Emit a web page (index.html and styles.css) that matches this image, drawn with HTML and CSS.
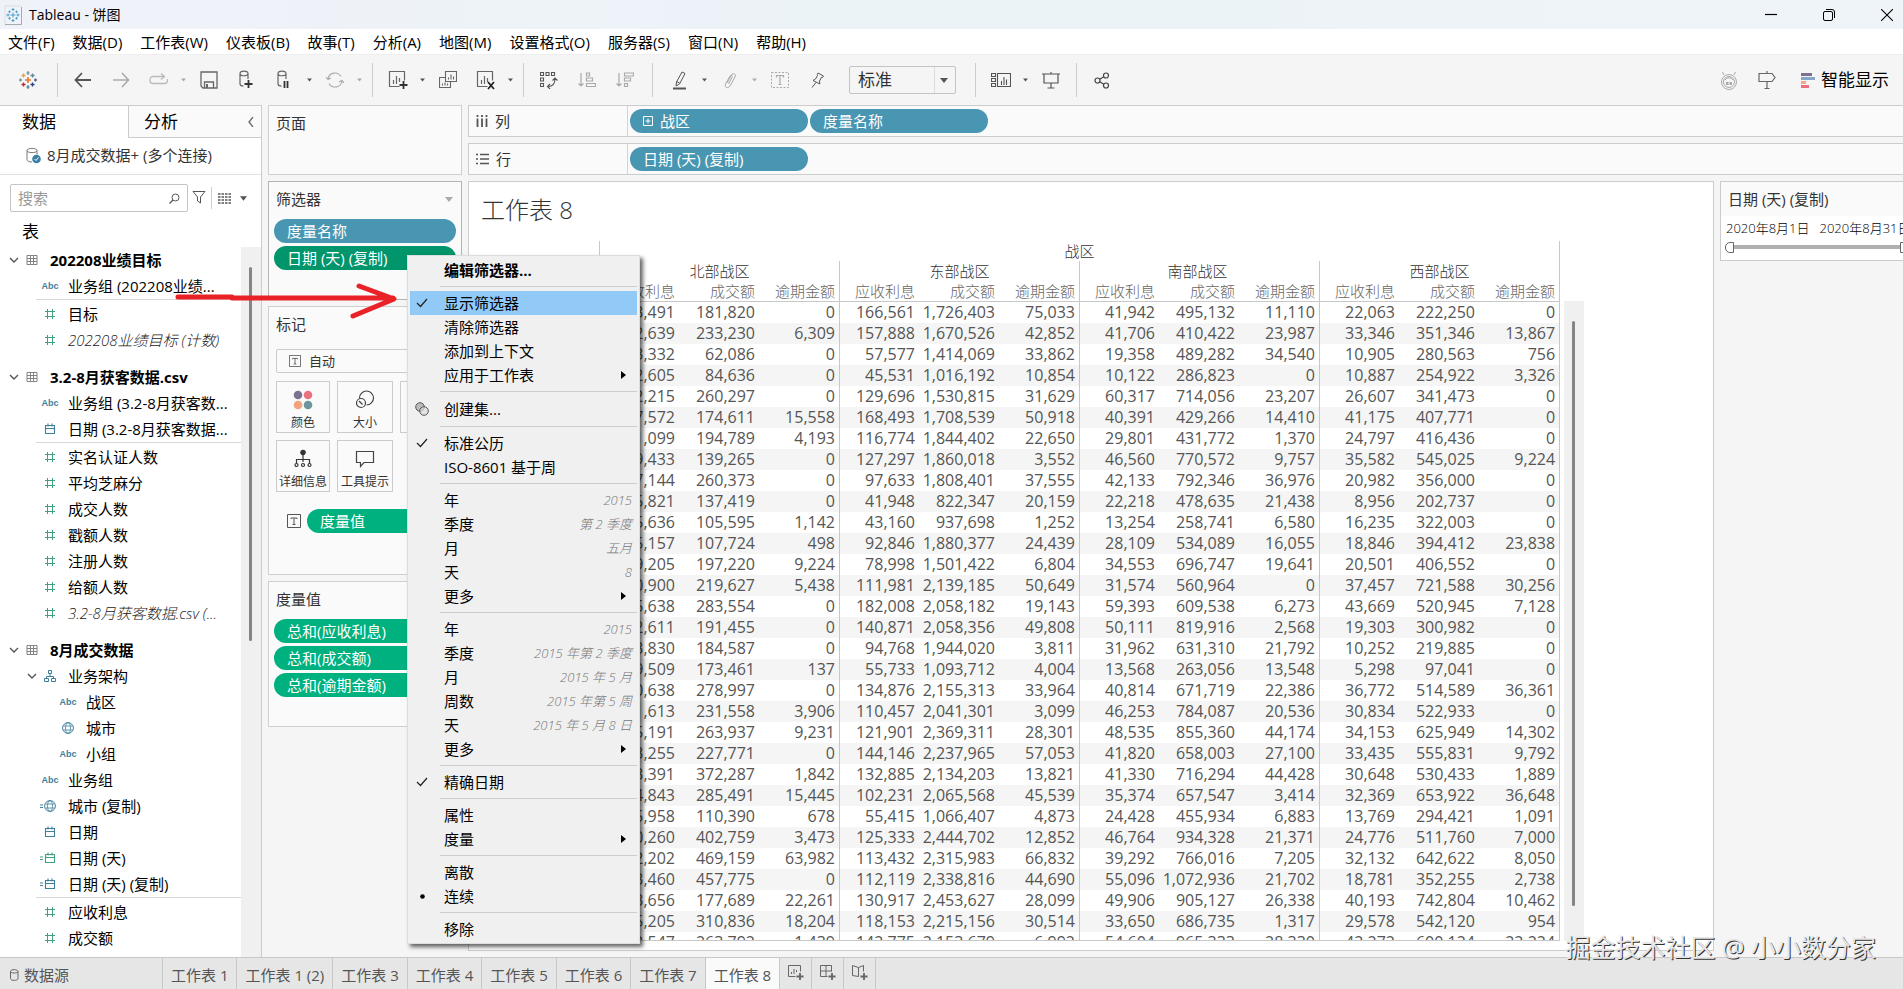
FILE: index.html
```html
<!DOCTYPE html>
<html lang="zh-CN">
<head>
	<title>Tableau - 饼图</title>
	<meta charset="UTF-8">
	<meta name="viewport" content="width=device-width, initial-scale=1.0">
	<link rel="stylesheet" href="styles.css">
</head>
<body>
	<!-- shared icons -->
	<svg class="defs" width="0" height="0">
		<symbol id="i-caret" viewBox="0 0 8 5"><path d="M0 0h8L4 5z" fill="currentColor"/></symbol>
		<symbol id="i-chev" viewBox="0 0 10 6"><path d="M1 1l4 4 4-4" fill="none" stroke="#555" stroke-width="1.4"/></symbol>
		<symbol id="i-check" viewBox="0 0 12 10"><path d="M1 5l3.500 3.500L11 1" fill="none" stroke="#222" stroke-width="1.200"/></symbol>
		<symbol id="i-table" viewBox="0 0 12 12"><path d="M1 1.500h10v9H1zM1 4.500h10M1 7.500h10M4.500 2v8M7.500 2v8" fill="none" stroke="#777" stroke-width=".9"/></symbol>
		<symbol id="i-hash" viewBox="0 0 24 12"><path d="M9.500 1v10M14.500 1v10M7 3.500h10M7 8.500h10" fill="none" stroke="currentColor"/></symbol>
		<symbol id="i-date" viewBox="0 0 24 12"><path d="M7.500 2.500h9v8h-9zM7.500 5.500h9M10 .5v3M14 .5v3" fill="none" stroke="currentColor" stroke-width="1.100"/></symbol>
		<symbol id="i-globe" viewBox="0 0 24 12"><path d="M7.500 4h9M7.500 8h9" fill="none" stroke="currentColor" stroke-width=".8"/><circle cx="12" cy="6" r="5.400" fill="none" stroke="currentColor"/><ellipse cx="12" cy="6" rx="2.500" ry="5.400" fill="none" stroke="currentColor" stroke-width=".8"/></symbol>
		<symbol id="i-eq" viewBox="0 0 24 12"><path d="M2 5h3M2 7.500h3" stroke="currentColor"/></symbol>
		<symbol id="i-tree" viewBox="0 0 24 12"><path d="M10.500 .5h3v3h-3zM6.500 8.500h4v3h-4zM13.500 8.500h4v3h-4zM12 4v2.500M8.500 8.500v-2h7v2" fill="none" stroke="currentColor"/></symbol>
		<symbol id="i-text" viewBox="0 0 14 14"><path d="M.5 .5h13v13h-13z" fill="none" stroke="#555"/><path d="M4 5V4h6v1M7 4v6.500M5.500 10.500h3" fill="none" stroke="#555"/></symbol>
		<symbol id="i-db" viewBox="0 0 22 22"><path d="M12 4.500v0c0-3.300-8-3.300-8 0v10.500c0 1.200 1.500 2 3.500 2.200M12 4.500c0 3-8 3-8 0M12 4.500v5.500" fill="none" stroke="#666" stroke-width="1.200"/></symbol>
		<symbol id="i-chart" viewBox="0 0 22 22"><path d="M12.500 17.500h-10v-15h15v9M6.500 15v-4M9.500 15v-8M12.500 13v-4" fill="none" stroke="#666" stroke-width="1.200"/></symbol>
	</svg>

	<header class="titlebar">
		<svg class="app-icon" width="20" height="20" viewBox="0 0 20 20"><path d="M2 19V1h16" fill="none" stroke="#ddd"/><path d="M2 19.500h16.500V2" fill="none" stroke="#aaa"/><path d="M10 7.500v5M7.500 10h5M10 3v3M8.500 4.500h3M10 14v3M8.500 15.500h3M3.500 10h3M5 8.500v3M13.500 10h3M15 8.500v3M6.500 5.500v2.500M5.300 6.700h2.400M13.500 5.500v2.500M12.300 6.700h2.400M6.500 12v2.500M5.300 13.300h2.400M13.500 12v2.500M12.300 13.300h2.400" stroke="#4a9fc8" stroke-width="1"/></svg>
		<h1 class="app-name">Tableau - 饼图</h1>
		<button class="win-btn" aria-label="最小化"><svg width="12" height="12"><path d="M0 5.500h12" stroke="#000" stroke-width="1.200"/></svg></button>
		<button class="win-btn" aria-label="还原"><svg width="12" height="12" fill="none" stroke="#000"><rect x=".5" y="2.500" width="9" height="9" rx="1.500"/><path d="M3 .5h6a2.500 2.500 0 0 1 2.500 2.500v6"/></svg></button>
		<button class="win-btn" aria-label="关闭"><svg width="12" height="12"><path d="M0 0l12 12M12 0L0 12" stroke="#000" stroke-width="1.100"/></svg></button>
	</header>

	<nav class="menubar">
		<button>文件(F)</button>
		<button>数据(D)</button>
		<button>工作表(W)</button>
		<button>仪表板(B)</button>
		<button>故事(T)</button>
		<button>分析(A)</button>
		<button>地图(M)</button>
		<button>设置格式(O)</button>
		<button>服务器(S)</button>
		<button>窗口(N)</button>
		<button>帮助(H)</button>
	</nav>

	<div class="toolbar">
		<button class="tool logo" aria-label="开始页面"><svg width="18" height="18" viewBox="0 0 18 18" stroke-width="1.300"><path d="M9 6v6M6 9h6" stroke="#e8762c" stroke-width="1.600"/><path d="M9 0v4M7.500 2h3" stroke="#7199a6"/><path d="M9 14v4M7.500 16h3" stroke="#5b879b"/><path d="M0 9h3M1.500 7.500v3" stroke="#7199a6"/><path d="M15 9h3M16.500 7.500v3" stroke="#5c6692"/><path d="M4.500 2.500v4M2.500 4.500h4" stroke="#e8a13c"/><path d="M13.500 2.500v4M11.500 4.500h4" stroke="#5b879b"/><path d="M4.500 11.500v4M2.500 13.500h4" stroke="#c72035"/><path d="M13.500 11.500v4M11.500 13.500h4" stroke="#1f447e"/></svg></button>
		<span class="sep"></span>
		<button class="tool" aria-label="后退"><svg width="18" height="16" viewBox="0 0 18 16"><path d="M8 1L1.500 8 8 15M1.500 8H17" fill="none" stroke="#555" stroke-width="1.800"/></svg></button>
		<button class="tool" aria-label="前进"><svg width="18" height="16" viewBox="0 0 18 16"><path d="M10 1l6.500 7L10 15M16.500 8H1" fill="none" stroke="#aaa" stroke-width="1.600"/></svg></button>
		<button class="tool" aria-label="重做"><svg width="20" height="14" viewBox="0 0 20 14"><path d="M15 3.500H4a3 3 0 0 0-3 3v1a3 3 0 0 0 3 3h11.500a3 3 0 0 0 3-3V6M12 .5l3.500 3L12 6.500" fill="none" stroke="#bbb" stroke-width="1.300"/></svg></button>
		<button class="drop off" aria-label="重做选项"><svg width="5" height="4"><use href="#i-caret"/></svg></button>
		<button class="tool" aria-label="保存"><svg width="18" height="18" fill="none" stroke="#666" stroke-width="1.300"><path d="M1 1h16v16H3l-2-2zM4.500 17v-6h9v6"/><path d="M7 13v4" stroke-width="2"/></svg></button>
		<button class="tool" aria-label="新建数据源"><svg width="22" height="22" viewBox="0 0 22 22"><use href="#i-db"/><path d="M12.500 11v8M8.500 15h8" stroke="#333" stroke-width="1.800"/></svg></button>
		<button class="tool" aria-label="暂停自动更新"><svg width="22" height="22" viewBox="0 0 22 22"><use href="#i-db"/><path d="M10.500 12v7M13.500 12v7" stroke="#333" stroke-width="1.800"/></svg></button>
		<button class="drop" aria-label="更新选项"><svg width="5" height="4"><use href="#i-caret"/></svg></button>
		<button class="tool" aria-label="运行更新"><svg width="18" height="16" viewBox="0 0 18 16" fill="none" stroke="#aaa" stroke-width="1.100"><path d="M2 7a7 7 0 0 1 13-2.500M16 9a7 7 0 0 1-13 2.500M0 5l2 2.500L5 6M18 11l-2-2.500L13 10"/></svg></button>
		<button class="drop off" aria-label="运行选项"><svg width="5" height="4"><use href="#i-caret"/></svg></button>
		<span class="sep"></span>
		<button class="tool" aria-label="新建工作表"><svg width="22" height="22" viewBox="0 0 22 22"><use href="#i-chart"/><path d="M16.500 12v8M12.500 16h8" stroke="#333" stroke-width="1.800"/></svg></button>
		<button class="drop" aria-label="新建选项"><svg width="5" height="4"><use href="#i-caret"/></svg></button>
		<button class="tool" aria-label="复制"><svg width="18" height="18" fill="none" stroke="#666" stroke-width="1.100"><path d="M6.500 .5h11v10h-11zM9.500 8.500v-2M12 8.500v-5M14.500 8.500v-3M6 6.500H.5v10h11V11M3.500 14.500v-2M6 14.500v-3M8.500 14.500v-2"/></svg></button>
		<button class="tool" aria-label="清除工作表"><svg width="22" height="22" viewBox="0 0 22 22"><use href="#i-chart"/><path d="M13 13l6 7M19 13l-6 7" stroke="#222" stroke-width="1.800"/></svg></button>
		<button class="drop" aria-label="清除选项"><svg width="5" height="4"><use href="#i-caret"/></svg></button>
		<span class="sep"></span>
		<button class="tool" aria-label="交换行和列"><svg width="18" height="18" fill="none" stroke="#555" stroke-width="1.100"><path d="M.5 1.500h3v3h-3zM6 1.500h3v3H6zM11.500 1.500h3v3h-3zM.5 7h3v3h-3zM.5 12.500h3v3h-3zM8 15.500c5 0 7-3 7-8M12.500 9.500L15 7l2.500 2.500M10 13l-2.500 2.500L10 18"/></svg></button>
		<button class="tool" aria-label="升序排序"><svg width="18" height="16" fill="none" stroke="#aaa" stroke-width="1.200"><path d="M3 1v13M.5 11.500L3 14l2.500-2.500M8.500 1h3v3h-3zM8.500 6h6v3h-6zM8.500 11.500h9v3h-9z"/></svg></button>
		<button class="tool" aria-label="降序排序"><svg width="18" height="16" fill="none" stroke="#aaa" stroke-width="1.200"><path d="M3 1v13M.5 11.500L3 14l2.500-2.500M8.500 1h9v3h-9zM8.500 6h6v3h-6zM8.500 11.500h3v3h-3z"/></svg></button>
		<span class="sep wide"></span>
		<button class="tool" aria-label="突出显示"><svg width="14" height="19" fill="none" stroke="#555"><path d="M9 1l3 1.500L6.500 13 3 15l.5-4zM3.500 10.500l3 1.500"/><path d="M0 17.500h13" stroke-width="2"/></svg></button>
		<button class="drop" aria-label="突出显示选项"><svg width="5" height="4"><use href="#i-caret"/></svg></button>
		<button class="tool" aria-label="组"><svg width="14" height="17" fill="none" stroke="#aaa"><path d="M4 11l4.500-8c1.500-2.500 5-1 3.500 2L7 14c-2 3-6 1.500-4.500-2L7 4c1.500-2 3 0 2 1.500L5.500 12"/></svg></button>
		<button class="drop off" aria-label="组选项"><svg width="5" height="4"><use href="#i-caret"/></svg></button>
		<button class="tool" aria-label="显示标记标签"><svg width="18" height="16" fill="none" stroke="#aaa"><path d="M.5 .5h17v15H.5z" stroke-dasharray="2 1.500"/><path d="M5.500 5.500v-2h7v2M9 3.500v9M7.500 12.500h3" stroke-width="1.200"/></svg></button>
		<button class="tool" aria-label="固定轴"><svg width="14" height="16" fill="none" stroke="#555"><path d="M7 1l5.500 3-1 1.500-1-.3L8.500 9l.3 3L2 8.500l2.500-1.500 2-3.500-.3-1zM5 10.500L1 15.500"/></svg></button>
		<div class="fit">
			<select aria-label="适合"><option>标准</option></select>
			<svg class="fit-caret" width="8" height="5"><use href="#i-caret"/></svg>
		</div>
		<span class="sep"></span>
		<button class="tool" aria-label="显示卡"><svg width="20" height="16" fill="none" stroke="#555" stroke-width="1.100"><path d="M.5 1.500h4v3h-4zM.5 6.500h4v3h-4zM.5 11.500h4v3h-4zM6.500 1.500h13v13h-13zM10.500 13V9M13 13V5M15.500 13V7.500"/></svg></button>
		<button class="drop" aria-label="显示卡选项"><svg width="5" height="4"><use href="#i-caret"/></svg></button>
		<button class="tool" aria-label="演示模式"><svg width="18" height="17" fill="none" stroke="#555" stroke-width="1.200"><path d="M0 2h18M2 2v9h14V2M9 0v2M9 11v5M5.500 16h7"/></svg></button>
		<span class="sep"></span>
		<button class="tool" aria-label="共享"><svg width="16" height="17" fill="none" stroke="#444" stroke-width="1.200"><circle cx="12" cy="3.500" r="2.500"/><circle cx="3.500" cy="8.500" r="2.500"/><circle cx="12" cy="13.500" r="2.500"/><path d="M5.700 7.200L9.800 4.800M5.700 9.800l4.100 2.400"/></svg></button>
		<span class="grow"></span>
		<button class="tool" aria-label="数据指导"><svg width="18" height="19" fill="none" stroke="#aaa"><circle cx="9" cy="11" r="7.500"/><circle cx="9" cy="11" r="5.500"/><path d="M4 4L2.500 1M14 4l1.500-3M5 9c2-3 6-3 8 0"/><path d="M6 12.500h2.500M9.500 12.500H12" stroke-width="3"/></svg></button>
		<button class="tool" aria-label="指南"><svg width="18" height="18" fill="none" stroke="#666" stroke-width="1.200"><path d="M1 2.500h13l3 4-3 4H1zM9 0v2.500M9 10.500v7M6.500 17.500h5"/></svg></button>
		<button class="show-me"><svg width="14" height="15"><path d="M0 0h11v3H0z" fill="#7c7193"/><path d="M0 4h14v3H0z" fill="#83a6c9"/><path d="M0 8h5v3H0z" fill="#f3a983"/><path d="M0 12h8v3H0z" fill="#e9707c"/></svg>智能显示</button>
	</div>

	<main class="workspace">
		<aside class="data-pane">
			<div class="tabs">
				<button class="tab active">数据</button>
				<button class="tab">分析<svg width="6" height="10"><path d="M5 0L1 5l4 5" fill="none" stroke="#666" stroke-width="1.300"/></svg></button>
			</div>
			<div class="source">
				<svg width="16" height="17" viewBox="0 0 16 17"><path d="M11 3.500v4M1 3.500v9c0 1.500 2 2.500 5 2.500M11 3.500c0 2.800-10 2.800-10 0s10-2.800 10 0" fill="none" stroke="#777"/><circle cx="10.500" cy="12" r="4.300" fill="#3a7fa5"/><path d="M8.500 12l1.500 1.500 2.500-3" fill="none" stroke="#fff"/></svg>
				8月成交数据+ (多个连接)
			</div>
			<div class="search-row">
				<div class="search">
					<input type="text" placeholder="搜索" aria-label="搜索">
					<svg width="11" height="11"><circle cx="6.500" cy="4.500" r="3.500" fill="none" stroke="#555"/><path d="M4 7L.5 10.500" stroke="#555" stroke-width="1.200"/></svg>
				</div>
				<button aria-label="筛选"><svg width="14" height="13"><path d="M1 .5h12L8.500 6v6l-3-2V6z" fill="none" stroke="#555"/></svg></button>
				<span class="bar"></span>
				<button class="view-as" aria-label="查看方式"><svg width="13" height="11"><path d="M0 1h13M0 4h13M0 7h13M0 10h13" stroke="#555" stroke-width="1.300" stroke-dasharray="2.500 1"/></svg><svg width="7" height="5"><use href="#i-caret"/></svg></button>
			</div>
			<h2 class="tables-title">表</h2>
			<div class="tree-wrap">
				<ul class="tree">
					<li class="head"><svg class="chev"><use href="#i-chev"/></svg><svg class="tbl"><use href="#i-table"/></svg>202208业绩目标</li>
					<li><i class="abc">Abc</i>业务组 (202208业绩...</li>
					<li class="split grn"><svg class="ico"><use href="#i-hash"/></svg>目标</li>
					<li class="grn ital"><svg class="ico"><use href="#i-hash"/></svg>202208业绩目标 (计数)</li>
					<li class="head"><svg class="chev"><use href="#i-chev"/></svg><svg class="tbl"><use href="#i-table"/></svg>3.2-8月获客数据.csv</li>
					<li><i class="abc">Abc</i>业务组 (3.2-8月获客数...</li>
					<li><svg class="ico"><use href="#i-date"/></svg>日期 (3.2-8月获客数据...</li>
					<li class="split grn"><svg class="ico"><use href="#i-hash"/></svg>实名认证人数</li>
					<li class="grn"><svg class="ico"><use href="#i-hash"/></svg>平均芝麻分</li>
					<li class="grn"><svg class="ico"><use href="#i-hash"/></svg>成交人数</li>
					<li class="grn"><svg class="ico"><use href="#i-hash"/></svg>戳额人数</li>
					<li class="grn"><svg class="ico"><use href="#i-hash"/></svg>注册人数</li>
					<li class="grn"><svg class="ico"><use href="#i-hash"/></svg>给额人数</li>
					<li class="grn ital"><svg class="ico"><use href="#i-hash"/></svg>3.2-8月获客数据.csv (...</li>
					<li class="head"><svg class="chev"><use href="#i-chev"/></svg><svg class="tbl"><use href="#i-table"/></svg>8月成交数据</li>
					<li class="folder"><svg class="chev"><use href="#i-chev"/></svg><svg class="ico"><use href="#i-tree"/></svg>业务架构</li>
					<li class="sub"><i class="abc">Abc</i>战区</li>
					<li class="sub"><svg class="ico"><use href="#i-globe"/></svg>城市</li>
					<li class="sub"><i class="abc">Abc</i>小组</li>
					<li><i class="abc">Abc</i>业务组</li>
					<li><svg class="ico"><use href="#i-eq"/><use href="#i-globe"/></svg>城市 (复制)</li>
					<li><svg class="ico"><use href="#i-date"/></svg>日期</li>
					<li class="grn"><svg class="ico"><use href="#i-eq"/><use href="#i-date"/></svg>日期 (天)</li>
					<li><svg class="ico"><use href="#i-eq"/><use href="#i-date"/></svg>日期 (天) (复制)</li>
					<li class="split grn"><svg class="ico"><use href="#i-hash"/></svg>应收利息</li>
					<li class="grn"><svg class="ico"><use href="#i-hash"/></svg>成交额</li>
				</ul>
				<div class="scroll"><div class="thumb"></div></div>
			</div>
		</aside>

		<section class="cards">
			<div class="card pages"><h2>页面</h2></div>
			<div class="card filters">
				<h2>筛选器<svg width="8" height="5"><use href="#i-caret"/></svg></h2>
				<button class="pill blue">度量名称</button>
				<button class="pill selected">日期 (天) (复制)</button>
			</div>
			<div class="card marks">
				<h2>标记</h2>
				<div class="mark-type">
					<svg width="12" height="12"><use href="#i-text"/></svg>
					<select aria-label="标记类型"><option>自动</option></select>
				</div>
				<div class="mark-grid">
					<button><svg width="20" height="20"><circle cx="5" cy="5" r="4.300" fill="#7c7193"/><circle cx="15" cy="5" r="4.300" fill="#ec7180"/><circle cx="5" cy="15" r="4.300" fill="#f2a37c"/><circle cx="15" cy="15" r="4.300" fill="#6d969c"/></svg>颜色</button>
					<button><svg width="20" height="20" fill="none" stroke="#444" stroke-width="1.200"><path d="M4.500 8a7 7 0 1 1 7 7"/><circle cx="6" cy="13" r="4.500"/><path d="M4 11l3.500 3.500"/></svg>大小</button>
					<button aria-label="文本"></button>
					<button><svg width="20" height="20" fill="none" stroke="#333" stroke-width="1.200"><circle cx="10" cy="3.500" r="2.200" fill="#333"/><path d="M10 5v8M3.500 14v-3.500h13V14"/><circle cx="3.500" cy="16" r="1.500"/><circle cx="10" cy="16" r="1.500"/><circle cx="16.500" cy="16" r="1.500"/></svg>详细信息</button>
					<button><svg width="20" height="20" fill="none" stroke="#444" stroke-width="1.200"><path d="M1.500 2.500h17v11H9l-3.500 4v-4h-4z"/></svg>工具提示</button>
				</div>
				<div class="mark-pill">
					<svg width="14" height="14"><use href="#i-text"/></svg>
					<button class="pill green">度量值</button>
				</div>
			</div>
			<div class="card measures">
				<h2>度量值</h2>
				<button class="pill green">总和(应收利息)</button>
				<button class="pill green">总和(成交额)</button>
				<button class="pill green">总和(逾期金额)</button>
			</div>
		</section>

		<section class="canvas">
			<div class="shelf">
				<h2><svg width="12" height="12"><path d="M1.500 0v2M6 0v2M10.500 0v2M1.500 3.500V12M6 3.500V12M10.500 3.500V12" stroke="#555" stroke-width="1.800"/></svg>列</h2>
				<button class="pill blue"><svg width="10" height="10" fill="none" stroke="#fff"><path d="M.5 .5h9v9h-9zM5 2.500v5M2.500 5h5"/></svg>战区</button>
				<button class="pill blue">度量名称</button>
			</div>
			<div class="shelf">
				<h2><svg width="13" height="12"><path d="M0 1.500h2M0 6h2M0 10.500h2M4 1.500h9M4 6h9M4 10.500h9" stroke="#555" stroke-width="1.600"/></svg>行</h2>
				<button class="pill blue">日期 (天) (复制)</button>
			</div>
			<div class="canvas-body">
				<div class="view">
					<h2 class="view-title">工作表 8</h2>
					<div class="view-body">
						<div class="table-clip">
							<table class="crosstab">
								<colgroup><col class="label-col"><col span="12" class="num-col"></colgroup>
								<thead>
									<tr class="top"><th></th><th colspan="12">战区</th></tr>
									<tr class="zone"><th></th><th colspan="3">北部战区</th><th colspan="3">东部战区</th><th colspan="3">南部战区</th><th colspan="3">西部战区</th></tr>
									<tr class="names"><th></th><th>应收利息</th><th>成交额</th><th>逾期金额</th><th>应收利息</th><th>成交额</th><th>逾期金额</th><th>应收利息</th><th>成交额</th><th>逾期金额</th><th>应收利息</th><th>成交额</th><th>逾期金额</th></tr>
								</thead>
								<tbody id="rows"></tbody>
							</table>
						</div>
						<div class="scroll"><div class="thumb"></div></div>
					</div>
				</div>
				<aside class="filter-panel">
					<h2>日期 (天) (复制)</h2>
					<div class="range-text"><span>2020年8月1日</span><span>2020年8月31日</span></div>
					<div class="range">
						<input type="range" min="1" max="31" value="1" aria-label="开始日期">
						<input type="range" class="end" min="1" max="31" value="31" aria-label="结束日期">
					</div>
				</aside>
			</div>
		</section>

		<div class="context-menu" role="menu">
			<button><b>编辑筛选器...</b></button>
			<hr>
			<button class="hover"><svg class="mark"><use href="#i-check"/></svg>显示筛选器</button>
			<button>清除筛选器</button>
			<button>添加到上下文</button>
			<button class="more">应用于工作表</button>
			<hr>
			<button class="tall"><svg class="sets" width="14" height="14"><circle cx="5" cy="5" r="4.300" fill="#bbb" stroke="#555"/><circle cx="9" cy="9" r="4.300" fill="#ddd" fill-opacity=".7" stroke="#555"/></svg>创建集...</button>
			<hr>
			<button><svg class="mark"><use href="#i-check"/></svg>标准公历</button>
			<button>ISO-8601 基于周</button>
			<hr>
			<button>年<i>2015</i></button>
			<button>季度<i>第 2 季度</i></button>
			<button>月<i>五月</i></button>
			<button>天<i>8</i></button>
			<button class="more">更多</button>
			<hr>
			<button>年<i>2015</i></button>
			<button>季度<i>2015 年第 2 季度</i></button>
			<button>月<i>2015 年 5 月</i></button>
			<button>周数<i>2015 年第 5 周</i></button>
			<button>天<i>2015 年 5 月 8 日</i></button>
			<button class="more">更多</button>
			<hr>
			<button><svg class="mark"><use href="#i-check"/></svg>精确日期</button>
			<hr>
			<button>属性</button>
			<button class="more">度量</button>
			<hr>
			<button>离散</button>
			<button><svg class="dot" width="5" height="5"><circle cx="2.500" cy="2.500" r="2.300"/></svg>连续</button>
			<hr>
			<button>移除</button>
		</div>

		<svg class="arrow" width="224" height="40" fill="none" stroke="#e92228" stroke-width="5" stroke-linejoin="round" stroke-linecap="round"><path d="M3 16h54l0 1h161M184 5l35 13-41 17"/></svg>
	</main>

	<footer class="sheets">
		<button class="source-tab"><svg width="9" height="12" fill="none" stroke="#666"><path d="M.5 2.500c0-2.500 7.500-2.500 7.500 0v7c0 2.500-7.500 2.500-7.500 0zM.5 2.500c0 2 7.500 2 7.500 0"/></svg>数据源</button>
		<button>工作表 1</button>
		<button>工作表 1 (2)</button>
		<button>工作表 3</button>
		<button>工作表 4</button>
		<button>工作表 5</button>
		<button>工作表 6</button>
		<button>工作表 7</button>
		<button class="active">工作表 8</button>
		<button class="new" aria-label="新建工作表"><svg width="16" height="16" fill="none" stroke="#666"><path d="M7.500 11.500h-7V.5h12v6M3.500 9V7M6 9V4M8.500 7V5"/><path d="M12 8v7M8.500 11.500h7" stroke-width="1.800"/></svg></button>
		<button class="new" aria-label="新建仪表板"><svg width="16" height="16" fill="none" stroke="#666"><path d="M7.500 11.500h-7V.5h11v6M.5 6h11M6 .5v11"/><path d="M12 8v7M8.500 11.500h7" stroke-width="1.800"/></svg></button>
		<button class="new" aria-label="新建故事"><svg width="16" height="16" fill="none" stroke="#666"><path d="M6.500 11.500l-6-1V.5l6 2 5-2v6M6.500 2.500v9"/><path d="M12 8v7M8.500 11.500h7" stroke-width="1.800"/></svg></button>
	</footer>

	<div class="watermark">掘金技术社区 @ 小小数分家</div>
	<script src="script.js"></script>
</body>
</html>
```

FILE: styles.css
```css
* {
	box-sizing: border-box;
}

body {
	margin: 0;
	height: 100vh;
	display: flex;
	flex-direction: column;
	overflow: hidden;
	background: #f5f5f5;
	font-family: "Open Sans", "Noto Sans CJK SC", sans-serif;
	font-size: 15px;
	line-height: 24px;
	color: #000;
}

button, select, input {
	font: inherit;
	color: inherit;
	border: 0;
	padding: 0;
	margin: 0;
	background: none;
}

button {
	white-space: nowrap;
}

h1, h2 {
	margin: 0;
	font-size: 15px;
	font-weight: normal;
}

svg {
	flex: none;
}

.defs {
	position: absolute;
}

.grow {
	flex: 1;
}

/* title bar */
.titlebar {
	height: 29px;
	flex: none;
	display: flex;
	align-items: center;
	padding-left: 3px;
	background: linear-gradient(90deg, #f0f2f9, #ebf3f7 50%, #eff4f9);
}

.app-name {
	flex: 1;
	margin-left: 6px;
	font-size: 14px;
}

.win-btn {
	width: 58px;
	height: 29px;
}

.win-btn:last-child {
	width: 45px;
	text-align: left;
	padding-left: 23px;
}

/* menu bar */
.menubar {
	height: 25px;
	flex: none;
	display: flex;
	align-items: center;
	gap: 18px;
	padding-left: 8px;
	background: #fff;
}

/* toolbar */
.toolbar {
	height: 51px;
	flex: none;
	display: flex;
	align-items: center;
	border-top: 1px solid #eee;
}

.tool {
	width: 38px;
	height: 34px;
	display: flex;
	align-items: center;
	justify-content: center;
}

.logo {
	width: 51px;
	padding-left: 4px;
}

.drop {
	width: 12px;
	height: 34px;
	display: flex;
	align-items: center;
	color: #555;
	padding-left: 3px;
}

.drop.off {
	color: #aaa;
}

.sep {
	width: 1px;
	height: 34px;
	margin: 0 6px;
	background: #ccc;
}

.sep.wide {
	margin: 0 8px;
}

.fit {
	position: relative;
	margin: 0 13px 0 12px;
}

.fit select {
	appearance: none;
	display: block;
	width: 107px;
	height: 28px;
	padding-left: 8px;
	border: 1px solid #c4c4c4;
	border-radius: 2px;
	background: linear-gradient(90deg, transparent 84px, #ddd 84px, #ddd 85px, transparent 85px);
	font-size: 17px;
	color: #333;
}

.fit-caret {
	position: absolute;
	right: 8px;
	top: 12px;
	color: #555;
}

.show-me {
	display: flex;
	align-items: center;
	gap: 6px;
	margin: 0 14px 0 15px;
	font-size: 17px;
}

/* workspace */
.workspace {
	position: relative;
	flex: 1;
	min-height: 0;
	display: flex;
	gap: 6px;
}

/* data pane */
.data-pane {
	width: 262px;
	flex: none;
	display: flex;
	flex-direction: column;
	background: #fff;
	border-right: 1px solid #ccc;
}

.tabs {
	height: 33px;
	flex: none;
	display: flex;
}

.tab {
	flex: 1;
	display: flex;
	align-items: center;
	justify-content: space-between;
	padding: 0 7px 0 15px;
	border: 1px solid #ccc;
	border-right: 0;
	background: #fafafa;
	font-size: 17px;
}

.tab.active {
	flex: none;
	width: 128px;
	padding-left: 22px;
	border-width: 1px 0 0;
	background: #fff;
}

.source {
	height: 37px;
	flex: none;
	display: flex;
	align-items: center;
	gap: 5px;
	padding: 0 0 2px 26px;
	border-bottom: 1px solid #e2e2e2;
	color: #333;
}

.search-row {
	display: flex;
	align-items: center;
	margin: 9px 0 0 10px;
}

.search {
	width: 178px;
	height: 28px;
	display: flex;
	align-items: center;
	padding: 0 7px;
	border: 1px solid #c4c4c4;
	border-radius: 2px;
	margin-right: 4px;
}

.search input {
	flex: 1;
	min-width: 0;
	outline: 0;
}

.search input::placeholder {
	color: #999;
}

.bar {
	width: 1px;
	height: 22px;
	margin: 0 6px 0 5px;
	background: #ccc;
}

.view-as {
	display: flex;
	align-items: center;
	gap: 9px;
	color: #555;
}

.tables-title {
	margin: 8px 0 3px 22px;
	font-size: 17px;
}

.tree-wrap {
	flex: 1;
	min-height: 0;
	display: flex;
	overflow: hidden;
}

.tree {
	flex: 1;
	margin: 0;
	padding: 0;
	list-style: none;
}

.tree li {
	height: 26px;
	display: flex;
	align-items: center;
	padding-left: 38px;
	white-space: nowrap;
}

.tree .head {
	padding-left: 6px;
	margin-top: 11px;
	font-weight: bold;
}

.tree .head:first-child {
	margin-top: 0;
}

.tree .split {
	height: 28px;
	padding-top: 2px;
	background: linear-gradient(#d8d8d8, #d8d8d8) 36px 0 / 100% 1px no-repeat;
}

.tree .sub {
	padding-left: 56px;
}

.tree .folder {
	padding-left: 24px;
}

.tree .ital {
	font-style: italic;
	font-weight: 300;
	color: #222;
}

.ico {
	width: 24px;
	height: 12px;
	margin-right: 6px;
	color: #3f7f9b;
}

.grn .ico {
	color: #3f9f7f;
}

.abc {
	width: 24px;
	margin-right: 6px;
	text-align: center;
	font: bold 9px "Liberation Sans", sans-serif;
	color: #3f7f9b;
}

.chev {
	width: 10px;
	height: 6px;
	margin: 0 3px;
}

.folder .chev {
	margin-right: 1px;
}

.tbl {
	width: 12px;
	height: 12px;
	margin: 0 12px 0 4px;
}

.scroll {
	width: 20px;
	flex: none;
	background: #f0f0f0;
}

.thumb {
	width: 3px;
	height: 374px;
	margin: 20px 0 0 8px;
	border-radius: 2px;
	background: #858585;
}

/* cards */
.cards {
	width: 194px;
	flex: none;
	display: flex;
	flex-direction: column;
	gap: 6px;
}

.card {
	border: 1px solid #d0d0d0;
	background: #fafafa;
	padding: 5px 5px 0;
	color: #333;
}

.card h2 {
	padding-left: 2px;
}

.pages {
	height: 70px;
}

.filters {
	height: 119px;
	border-color: #b4b4b4;
}

.filters h2 {
	display: flex;
	align-items: center;
	justify-content: space-between;
	padding-right: 3px;
}

.filters svg {
	color: #aaa;
}

.marks {
	height: 269px;
}

.measures {
	height: 146px;
}

.pill {
	display: flex;
	align-items: center;
	gap: 7px;
	width: 182px;
	height: 24px;
	margin-bottom: 3px;
	padding-left: 13px;
	border-radius: 12px;
	color: #fff;
}

.card h2 + .pill {
	margin-top: 8px;
}

.blue {
	background: #4996b2;
}

.green {
	background: #00b180;
}

.selected {
	background: #00956b;
}

.mark-type {
	height: 24px;
	display: flex;
	align-items: center;
	gap: 8px;
	margin: 13px 2px 8px;
	padding-left: 12px;
	border: 1px solid #ccc;
	border-radius: 2px;
	font-size: 13px;
}

.mark-type select {
	appearance: none;
	flex: 1;
}

.mark-grid {
	display: grid;
	grid-template-columns: 54px 56px 54px;
	grid-auto-rows: 52px;
	gap: 7px;
	padding-left: 2px;
}

.mark-grid button {
	display: flex;
	flex-direction: column;
	align-items: center;
	justify-content: flex-end;
	gap: 4px;
	border: 1px solid #ccc;
	font-size: 12px;
	line-height: 18px;
}

.mark-pill {
	display: flex;
	align-items: center;
	gap: 6px;
	margin: 17px 0 0 13px;
}

.mark-pill .pill {
	width: 149px;
	margin: 0;
}

/* shelves and view */
.canvas {
	flex: 1;
	min-width: 0;
	display: flex;
	flex-direction: column;
	gap: 6px;
}

.shelf {
	height: 32px;
	flex: none;
	display: flex;
	align-items: center;
	gap: 2px;
	border: 1px solid #ccc;
	border-right: 0;
	background: #fafafa;
}

.shelf h2 {
	width: 159px;
	height: 30px;
	display: flex;
	align-items: center;
	gap: 7px;
	padding-left: 7px;
	border-right: 1px solid #d4d4d4;
	color: #333;
}

.shelf .pill {
	width: 178px;
	margin: 0;
}

.canvas-body {
	flex: 1;
	min-height: 0;
	display: flex;
	align-items: flex-start;
	gap: 6px;
}

.view {
	flex: 1;
	min-width: 0;
	align-self: stretch;
	display: flex;
	flex-direction: column;
	margin-bottom: 6px;
	padding-bottom: 9px;
	border: 1px solid #ccc;
	background: #fff;
}

.view-title {
	height: 59px;
	line-height: 56px;
	padding-left: 12px;
	font-size: 24px;
	font-weight: 300;
	color: #333;
}

.view-body {
	flex: 1;
	min-height: 0;
	display: flex;
	gap: 4px;
	padding-left: 16px;
}

.table-clip {
	overflow: hidden;
	border-bottom: 1px solid #c8c8c8;
}

.crosstab {
	width: 1075px;
	table-layout: fixed;
	border-spacing: 0;
	color: #333;
}

.label-col {
	width: 115px;
}

.num-col {
	width: 80px;
}

.crosstab th, .crosstab td {
	padding: 0 5px 0 0;
	height: 21px;
	line-height: 21px;
	font-weight: normal;
	text-align: right;
	white-space: nowrap;
}

.crosstab td {
	font-size: 16px;
	color: #555;
}

.crosstab thead th {
	height: 20px;
	line-height: 20px;
	font-weight: 300;
}

.crosstab .top th, .crosstab .zone th {
	padding: 0;
	text-align: center;
}

.crosstab .names th {
	height: 21px;
	border-bottom: 1px solid #c8c8c8;
	color: #666;
}

.crosstab th:first-child, .top th, .zone th, .names th:nth-child(3n+1), .crosstab td:nth-child(3n+1) {
	border-right: 1px solid #c8c8c8;
}

.crosstab th:nth-child(3n+1), .crosstab td:nth-child(3n+1) {
	padding-right: 4px;
}

.crosstab tbody tr:nth-child(even) {
	background: #f5f5f5;
}

.view-body .scroll {
	margin-top: 60px;
}

.view-body .thumb {
	height: 585px;
}

/* date filter */
.filter-panel {
	width: 183px;
	flex: none;
	height: 80px;
	overflow: hidden;
	border: 1px solid #ccc;
	border-right: 0;
	background: #fff;
	white-space: nowrap;
}

.filter-panel h2 {
	height: 34px;
	line-height: 34px;
	padding-left: 7px;
	background: #fafafa;
	color: #333;
}

.range-text {
	display: flex;
	gap: 10px;
	padding-left: 5px;
	font-size: 13px;
	font-weight: 300;
	line-height: 25px;
}

.range {
	display: grid;
	width: 190px;
	margin-left: 4px;
}

.range input {
	grid-area: 1 / 1;
	appearance: none;
	height: 12px;
	width: 184px;
	background: linear-gradient(#b0b0b0, #b0b0b0) 4px 4px / 100% 4px no-repeat;
}

.range .end {
	background: none;
	pointer-events: none;
}

.range input::-webkit-slider-thumb {
	appearance: none;
	width: 9px;
	height: 11px;
	border: 1px solid #666;
	border-radius: 5px 0 0 5px;
	background: #fff;
}

.range .end::-webkit-slider-thumb {
	border-radius: 0 5px 5px 0;
}

/* filter pill menu */
.context-menu {
	position: absolute;
	left: 407px;
	top: 150px;
	width: 233px;
	padding: 2px;
	border: 1px solid #ddd;
	background: #f0f0f0;
	box-shadow: 3px 3px 4px rgba(0, 0, 0, 0.6);
}

.context-menu button {
	position: relative;
	width: 100%;
	height: 24px;
	display: flex;
	align-items: center;
	justify-content: space-between;
	padding: 0 5px 0 34px;
}

.context-menu .tall {
	height: 26px;
}

.context-menu .hover {
	background: #91c9f7;
}

.context-menu hr {
	height: 1px;
	margin: 4px 0 4px 30px;
	border: 0;
	background: #ccc;
}

.context-menu i {
	font-size: 13px;
	font-weight: 300;
	color: #777;
}

.context-menu .more::after {
	content: "";
	margin-right: 6px;
	border-left: 5px solid #000;
	border-top: 4px solid transparent;
	border-bottom: 4px solid transparent;
}

.context-menu svg {
	position: absolute;
	left: 6px;
}

.context-menu .mark {
	width: 12px;
	height: 10px;
}

.context-menu .sets {
	left: 5px;
}

.context-menu .dot {
	left: 10px;
}

.arrow {
	position: absolute;
	left: 175px;
	top: 176px;
}

/* sheet tabs */
.sheets {
	height: 32px;
	flex: none;
	display: flex;
	border-top: 1px solid #c8c8c8;
	background: #e6e6e6;
	color: #555;
}

.sheets button {
	padding: 2px 8px 0;
	border-right: 1px solid #c8c8c8;
}

.sheets .source-tab {
	width: 163px;
	padding-left: 10px;
	display: flex;
	align-items: center;
	gap: 5px;
}

.sheets .active {
	background: #fafafa;
}

.sheets .new {
	width: 32px;
}

.watermark {
	position: absolute;
	right: 27px;
	bottom: 24px;
	font-size: 25px;
	line-height: 36px;
	color: #e6e6e6;
	text-shadow: 1px 1px 0 #333;
}
```

FILE: script.js
```js
var rows = [
	"3,491 181,820 0 166,561 1,726,403 75,033 41,942 495,132 11,110 22,063 222,250 0",
	"2,639 233,230 6,309 157,888 1,670,526 42,852 41,706 410,422 23,987 33,346 351,346 13,867",
	"3,332 62,086 0 57,577 1,414,069 33,862 19,358 489,282 34,540 10,905 280,563 756",
	"2,605 84,636 0 45,531 1,016,192 10,854 10,122 286,823 0 10,887 254,922 3,326",
	"2,215 260,297 0 129,696 1,530,815 31,629 60,317 714,056 23,207 26,607 341,473 0",
	"7,572 174,611 15,558 168,493 1,708,539 50,918 40,391 429,266 14,410 41,175 407,771 0",
	"1,099 194,789 4,193 116,774 1,844,402 22,650 29,801 431,772 1,370 24,797 416,436 0",
	"9,433 139,265 0 127,297 1,860,018 3,552 46,560 770,572 9,757 35,582 545,025 9,224",
	"7,144 260,373 0 97,633 1,808,401 37,555 42,133 792,346 36,976 20,982 356,000 0",
	"5,821 137,419 0 41,948 822,347 20,159 22,218 478,635 21,438 8,956 202,737 0",
	"5,636 105,595 1,142 43,160 937,698 1,252 13,254 258,741 6,580 16,235 322,003 0",
	"5,157 107,724 498 92,846 1,880,377 24,439 28,109 534,089 16,055 18,846 394,412 23,838",
	"9,205 197,220 9,224 78,998 1,501,422 6,804 34,553 696,747 19,641 20,501 406,552 0",
	"0,900 219,627 5,438 111,981 2,139,185 50,649 31,574 560,964 0 37,457 721,588 30,256",
	"5,638 283,554 0 182,008 2,058,182 19,143 59,393 609,538 6,273 43,669 520,945 7,128",
	"2,611 191,455 0 140,871 2,058,356 49,808 50,111 819,916 2,568 19,303 300,982 0",
	"3,830 184,587 0 94,768 1,944,020 3,811 31,962 631,310 21,792 10,252 219,885 0",
	"9,509 173,461 137 55,733 1,093,712 4,004 13,568 263,056 13,548 5,298 97,041 0",
	"0,638 278,997 0 134,876 2,155,313 33,964 40,814 671,719 22,386 36,772 514,589 36,361",
	"1,613 231,558 3,906 110,457 2,041,301 3,099 46,253 784,087 20,536 30,834 522,933 0",
	"5,191 263,937 9,231 121,901 2,369,311 28,301 48,535 855,360 44,174 34,153 625,949 14,302",
	"3,255 227,771 0 144,146 2,237,965 57,053 41,820 658,003 27,100 33,435 555,831 9,792",
	"3,391 372,287 1,842 132,885 2,134,203 13,821 41,330 716,294 44,428 30,648 530,433 1,889",
	"4,843 285,491 15,445 102,231 2,065,568 45,539 35,374 657,547 3,414 32,369 653,922 36,648",
	"5,958 110,390 678 55,415 1,066,407 4,873 24,428 455,934 6,883 13,769 294,421 1,091",
	"0,260 402,759 3,473 125,333 2,444,702 12,852 46,764 934,328 21,371 24,776 511,760 7,000",
	"2,202 469,159 63,982 113,432 2,315,983 66,832 39,292 766,016 7,205 32,132 642,622 8,050",
	"3,460 457,775 0 112,119 2,338,816 44,690 55,096 1,072,936 21,702 18,781 352,255 2,738",
	"3,656 177,689 22,261 130,917 2,453,627 28,099 49,906 905,127 26,338 40,193 742,804 10,462",
	"5,205 310,836 18,204 118,153 2,215,156 30,514 33,650 686,735 1,317 29,578 542,120 954",
	"2,547 263,792 1,439 142,775 2,153,679 6,992 54,604 965,333 28,330 42,272 600,124 22,224"
];

var body = document.getElementById("rows");
rows.forEach(function (line) {
	var tr = body.insertRow();
	tr.appendChild(document.createElement("th"));
	line.split(" ").forEach(function (value) {
		tr.insertCell().textContent = value;
	});
});
```
